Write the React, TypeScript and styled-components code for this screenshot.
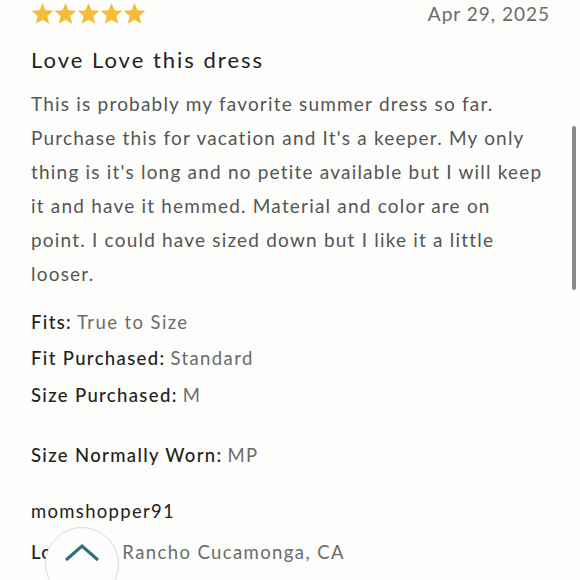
import styled, { createGlobalStyle } from "styled-components";

const GlobalStyle = createGlobalStyle`
  html, body {
    margin: 0;
    padding: 0;
    background: #fdfdfb;
  }
  body {
    font-family: Lato, "Noto Sans", sans-serif;
    overflow: hidden;
  }
`;

const Page = styled.div`
  position: relative;
  width: 580px;
  height: 580px;
  overflow: hidden;
  background: #fdfdfb;
  box-sizing: border-box;
  padding: 0 31px;
`;

const Header = styled.div`
  display: flex;
  justify-content: space-between;
  align-items: center;
  height: 26px;
`;

const Stars = styled.div`
  display: flex;
  gap: 0;
  margin-top: 1px;
`;

const DateText = styled.span`
  font-size: 19px;
  color: #6b6b6b;
  letter-spacing: 1px;
  margin-right: -1px;
`;

const Title = styled.h2`
  margin: 20px 0 0;
  font-size: 22px;
  font-weight: 400;
  color: #222;
  letter-spacing: 2px;
  line-height: 28px;
`;

const Body = styled.p`
  margin: 13px 0 0;
  font-size: 19px;
  line-height: 34px;
  color: #555;
  letter-spacing: 1.2px;
  white-space: nowrap;
`;

const Detail = styled.div<{ $gap: number }>`
  margin-top: ${(p) => p.$gap}px;
  font-size: 18.5px;
  line-height: 26px;
  letter-spacing: 1.35px;
  white-space: nowrap;
`;

const Label = styled.span`
  color: #222;
  font-weight: 500;
`;

const Value = styled.span`
  color: #6b6b6b;
  margin-left: 5px;
  letter-spacing: 1.4px;
`;

const UserName = styled.div`
  margin-top: 30px;
  font-size: 18.5px;
  line-height: 26px;
  color: #222;
  letter-spacing: 1.3px;
`;

const Scrollbar = styled.div`
  position: absolute;
  right: 4px;
  top: 126px;
  width: 4px;
  height: 164px;
  border-radius: 2px;
  background: #8a8a8a;
`;

const TopButton = styled.button`
  position: absolute;
  left: 45px;
  top: 527px;
  width: 74px;
  height: 74px;
  border-radius: 50%;
  border: 1.5px solid #dcdcdc;
  background: #fdfdfb;
  display: flex;
  align-items: flex-start;
  justify-content: center;
  padding: 15px 0 0;
  box-sizing: border-box;
`;

const Star = () => (
  <svg width="23" height="23" viewBox="0 0 24 24">
    <polygon
      points="12,1 15.1,8.5 23.3,9.2 17.1,14.6 19,22.8 12,18.5 5,22.8 6.9,14.6 0.7,9.2 8.9,8.5"
      fill="#f1bd3b"
    />
  </svg>
);

const details = [
  { label: "Fits:", value: "True to Size", gap: 18 },
  { label: "Fit Purchased:", value: "Standard", gap: 10 },
  { label: "Size Purchased:", value: "M", gap: 11 },
  { label: "Size Normally Worn:", value: "MP", gap: 34 },
];

export default function App() {
  return (
    <>
      <GlobalStyle />
      <Page>
        <Header>
          <Stars>
            {[0, 1, 2, 3, 4].map((i) => (
              <Star key={i} />
            ))}
          </Stars>
          <DateText>Apr 29, 2025</DateText>
        </Header>
        <Title>Love Love this dress</Title>
        <Body>
          This is probably my favorite summer dress so far.
          <br />
          Purchase this for vacation and It's a keeper. My only
          <br />
          thing is it's long and no petite available but I will keep
          <br />
          it and have it hemmed. Material and color are on
          <br />
          point. I could have sized down but I like it a little
          <br />
          looser.
        </Body>
        {details.map((d) => (
          <Detail key={d.label} $gap={d.gap}>
            <Label>{d.label}</Label>
            <Value>{d.value}</Value>
          </Detail>
        ))}
        <UserName>momshopper91</UserName>
        <Detail $gap={15}>
          <Label>Location:</Label>
          <Value>Rancho Cucamonga, CA</Value>
        </Detail>
        <Scrollbar />
        <TopButton aria-label="Back to top">
          <svg width="38" height="20" viewBox="0 0 38 20">
            <polyline
              points="3,17 19,3 35,17"
              fill="none"
              stroke="#2b6e7e"
              strokeWidth="3"
            />
          </svg>
        </TopButton>
      </Page>
    </>
  );
}
